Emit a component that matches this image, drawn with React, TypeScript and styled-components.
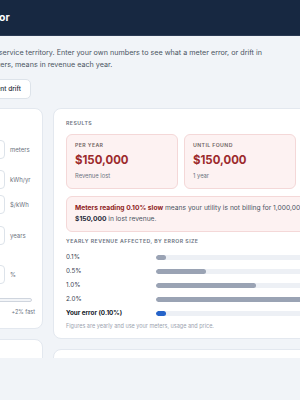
import React from 'react'
import styled, { createGlobalStyle } from 'styled-components'

const GlobalStyle = createGlobalStyle`
  html, body {
    margin: 0;
    padding: 0;
    background: #f1f4f8;
  }
  body {
    font-family: Inter, "Noto Sans", sans-serif;
    color: #374151;
  }
`

const Viewport = styled.div`
  width: 300px;
  height: 400px;
  overflow: hidden;
  background: #f1f4f8;
`

const Header = styled.header`
  height: 35px;
  background: #172841;
  box-shadow: 0 1px 0 #2a3a53;
  display: flex;
  align-items: center;
`

// the page is wider than the window: it starts left of the screen edge
const Container = styled.div`
  margin-left: -200px;
  width: 640px;
  padding: 0 13px;
  box-sizing: border-box;
  flex-shrink: 0;
`

const Title = styled.h1`
  margin: 0;
  color: #ffffff;
  font-size: 10.4px;
  font-weight: 700;
  letter-spacing: 0.15px;
  white-space: nowrap;
`

const Intro = styled.p`
  margin: 12px 0 0;
  max-width: 500px;
  font-size: 7.2px;
  line-height: 12px;
  color: #4b5563;
`

const ButtonRow = styled.div`
  display: flex;
  gap: 10px;
  margin-top: 8px;
`

const Button = styled.button`
  height: 20px;
  padding: 0 9px;
  background: #ffffff;
  border: 1px solid #dde3ea;
  border-radius: 5px;
  font-family: inherit;
  font-size: 6.5px;
  font-weight: 500;
  color: #1f2937;
  white-space: nowrap;
`

const Main = styled.div`
  margin-top: 9px;
  height: 250px;
  overflow: hidden;
  display: grid;
  grid-template-columns: 230px 372px;
  gap: 10px;
  align-items: start;
`

const Column = styled.div`
  display: flex;
  flex-direction: column;
  gap: 10px;
`

const Card = styled.section<{ $pad?: string }>`
  background: #ffffff;
  border: 1px solid #e3e8ef;
  border-radius: 8px;
  padding: ${p => p.$pad || '12px'};
`

const CardHeading = styled.h2`
  margin: 0;
  font-size: 7.5px;
  line-height: 10px;
  font-weight: 700;
  color: #111827;
`

const FieldRow = styled.div<{ $gap: number }>`
  display: flex;
  align-items: center;
  gap: 5px;
  height: 19px;
  margin-top: ${p => p.$gap}px;
`

const FieldLabel = styled.label`
  flex: 1;
  font-size: 6.5px;
  color: #374151;
  white-space: nowrap;
  overflow: hidden;
`

const Input = styled.div`
  width: 80px;
  height: 19px;
  box-sizing: border-box;
  border: 1px solid #dde3ea;
  border-radius: 4px;
  background: #ffffff;
  display: flex;
  align-items: center;
  padding: 0 6px;
  font-size: 6.5px;
  color: #111827;
`

const Unit = styled.span`
  width: 25px;
  font-size: 6px;
  color: #6b7280;
`

const SliderTrack = styled.div`
  margin: 14px 3px 0 0;
  height: 4px;
  border: 1px solid #cfd5de;
  border-radius: 3px;
  background: #f3f5f8;
  box-sizing: border-box;
`

const SliderScale = styled.div`
  display: flex;
  justify-content: space-between;
  margin-top: 6px;
  font-size: 5.5px;
  line-height: 8px;
  color: #6b7280;
`

const SectionLabel = styled.div<{ $top?: number }>`
  margin-top: ${p => p.$top || 0}px;
  font-size: 5.2px;
  line-height: 8px;
  font-weight: 600;
  letter-spacing: 0.45px;
  text-transform: uppercase;
  color: #6b7280;
`

const ResultGrid = styled.div`
  display: grid;
  grid-template-columns: repeat(3, 112px);
  gap: 6px;
  margin-top: 7px;
`

const ResultBox = styled.div`
  background: #fdf2f2;
  border: 1px solid #f4d8d8;
  border-radius: 6px;
  padding: 6px 8px 8px;
`

const ResultLabel = styled.div`
  font-size: 5.2px;
  line-height: 8px;
  font-weight: 600;
  letter-spacing: 0.4px;
  text-transform: uppercase;
  color: #6f6262;
`

const ResultValue = styled.div`
  margin-top: 4px;
  font-size: 11.4px;
  line-height: 15px;
  font-weight: 700;
  color: #9c2a2c;
`

const ResultSub = styled.div`
  margin-top: 3px;
  font-size: 5.8px;
  line-height: 9px;
  color: #6b7280;
`

const Summary = styled.p`
  margin: 7px 0 0;
  padding: 6px 8px;
  background: #fdf2f2;
  border: 1px solid #f4d8d8;
  border-radius: 6px;
  font-size: 6.7px;
  line-height: 11px;
  color: #4b5563;

  strong {
    font-weight: 700;
    color: #1f2937;
  }
`

const Alert = styled.strong`
  && {
    color: #8f1d22;
  }
`

const BarList = styled.div`
  margin-top: 5px;
`

const BarRow = styled.div`
  display: grid;
  grid-template-columns: 90px 200px;
  align-items: center;
  height: 14px;
`

const BarLabel = styled.span<{ $bold?: boolean }>`
  font-size: 6.3px;
  font-weight: ${p => (p.$bold ? 700 : 400)};
  color: ${p => (p.$bold ? '#111827' : '#374151')};
`

const Track = styled.div`
  height: 5px;
  border-radius: 3px;
  background: #edf0f5;
  overflow: hidden;
`

const Fill = styled.div<{ $mine?: boolean }>`
  height: 100%;
  border-radius: 3px;
  background: ${p => (p.$mine ? '#2563c9' : '#9aa3b4')};
`

const Note = styled.p`
  margin: 2px 0 0;
  font-size: 5.5px;
  line-height: 8px;
  color: #9ca3af;
`

const fields = [
  { label: 'Number of meters', value: '100,000', unit: 'meters', gap: 9 },
  { label: 'Average use', value: '10,000', unit: 'kWh/yr', gap: 11 },
  { label: 'Price', value: '0.15', unit: '$/kWh', gap: 6 },
  { label: 'Time to find', value: '1', unit: 'years', gap: 12 },
  { label: 'Meter error', value: '-0.10', unit: '%', gap: 20 },
]

const bars = [
  { label: '0.1%', pct: 0.1 },
  { label: '0.5%', pct: 0.5 },
  { label: '1.0%', pct: 1.0 },
  { label: '2.0%', pct: 2.0 },
]

const App = () => {
  return (
    <>
      <GlobalStyle />
      <Viewport>
        <Header>
          <Container>
            <Title>Meter Accuracy &amp; Revenue Calculator</Title>
          </Container>
        </Header>
        <Container>
          <Intro>
            The figures here are a worked example for one typical service territory. Enter your own
            numbers to see what a meter error, or drift in
            <br />
            the accuracy of a very big population of residential meters, means in revenue each year.
          </Intro>
          <ButtonRow>
            <Button>Reset to example figures</Button>
            <Button>Apply the typical current drift</Button>
          </ButtonRow>
          <Main>
            <Column>
              <Card $pad="12px 7px 12px 12px">
                <CardHeading>Your numbers</CardHeading>
                {fields.map(f => (
                  <FieldRow key={f.label} $gap={f.gap}>
                    <FieldLabel>{f.label}</FieldLabel>
                    <Input>{f.value}</Input>
                    <Unit>{f.unit}</Unit>
                  </FieldRow>
                ))}
                <SliderTrack />
                <SliderScale>
                  <span>-2% slow</span>
                  <span>+2% fast</span>
                </SliderScale>
              </Card>
              <Card>
                <CardHeading>How it works</CardHeading>
              </Card>
            </Column>
            <Column>
              <Card $pad="10px 12px 8px">
                <SectionLabel>Results</SectionLabel>
                <ResultGrid>
                  <ResultBox>
                    <ResultLabel>Per year</ResultLabel>
                    <ResultValue>$150,000</ResultValue>
                    <ResultSub>Revenue lost</ResultSub>
                  </ResultBox>
                  <ResultBox>
                    <ResultLabel>Until found</ResultLabel>
                    <ResultValue>$150,000</ResultValue>
                    <ResultSub>1 year</ResultSub>
                  </ResultBox>
                  <ResultBox>
                    <ResultLabel>Energy</ResultLabel>
                    <ResultValue>1,000,000</ResultValue>
                    <ResultSub>kWh not billed</ResultSub>
                  </ResultBox>
                </ResultGrid>
                <Summary>
                  <Alert>Meters reading 0.10% slow</Alert> means your utility is not billing for
                  1,000,000 kWh of energy each year, or <strong>$150,000</strong> in lost revenue.
                </Summary>
                <SectionLabel $top={5}>Yearly revenue affected, by error size</SectionLabel>
                <BarList>
                  {bars.map(b => (
                    <BarRow key={b.label}>
                      <BarLabel>{b.label}</BarLabel>
                      <Track>
                        <Fill style={{ width: `${(b.pct / 2) * 100}%` }} />
                      </Track>
                    </BarRow>
                  ))}
                  <BarRow>
                    <BarLabel $bold>Your error (0.10%)</BarLabel>
                    <Track>
                      <Fill $mine style={{ width: `${(0.1 / 2) * 100}%` }} />
                    </Track>
                  </BarRow>
                </BarList>
                <Note>Figures are yearly and use your meters, usage and price.</Note>
              </Card>
              <Card>
                <CardHeading>Assumptions</CardHeading>
              </Card>
            </Column>
          </Main>
        </Container>
      </Viewport>
    </>
  )
}

export default App
